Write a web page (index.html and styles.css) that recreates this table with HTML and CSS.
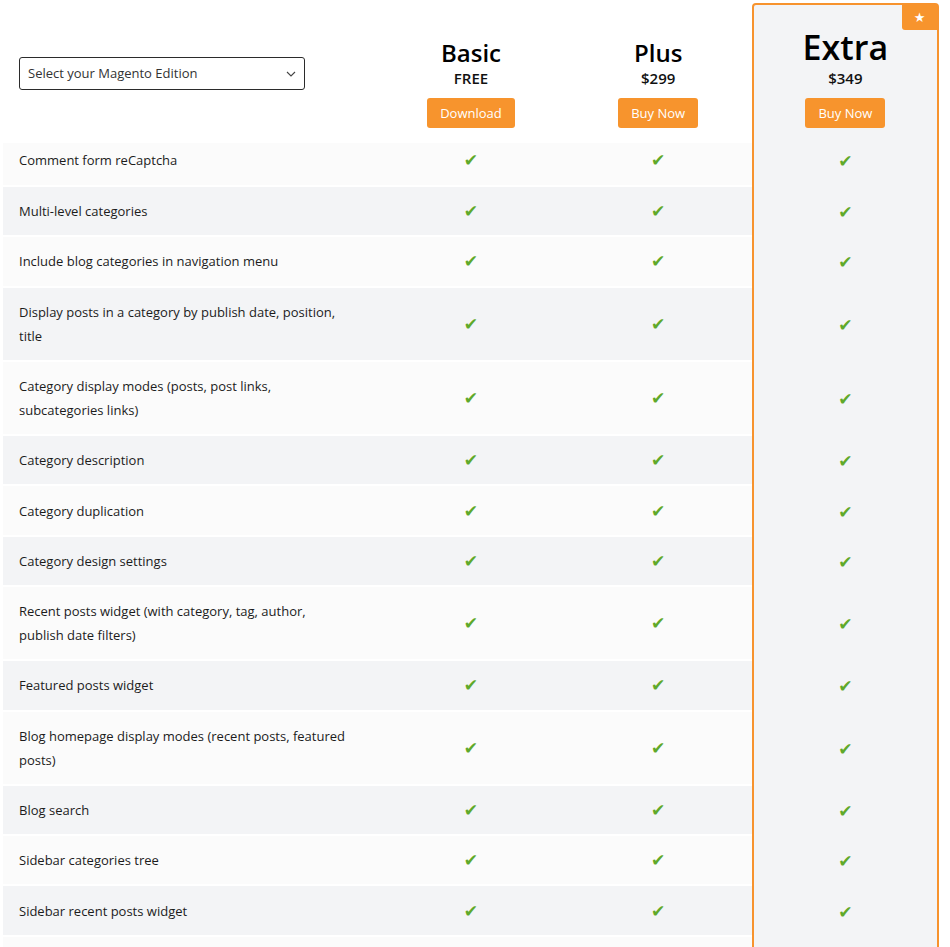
FILE: index.html
```html
<!DOCTYPE html>
<html lang="en">
<head>
<meta charset="utf-8">
<title>Magento Blog Editions</title>
<link rel="stylesheet" href="styles.css">
</head>
<body>
<div class="compare">
  <div class="row head">
    <div class="cell feature select-cell">
      <div class="select">
        <span>Select your Magento Edition</span>
        <svg class="chev" width="10" height="6" viewBox="0 0 10 6"><polyline points="1,1 5,5 9,1" fill="none" stroke="#444" stroke-width="1.1"/></svg>
      </div>
    </div>
    <div class="cell plan">
      <div class="plan-name">Basic</div>
      <div class="price">FREE</div>
      <a class="btn">Download</a>
    </div>
    <div class="cell plan">
      <div class="plan-name">Plus</div>
      <div class="price">$299</div>
      <a class="btn">Buy Now</a>
    </div>
    <div class="cell plan extra extra-top">
      <span class="badge">★</span>
      <div class="plan-name big">Extra</div>
      <div class="price">$349</div>
      <a class="btn">Buy Now</a>
    </div>
  </div>

  <div class="row light first"><div class="cell feature">Comment form reCaptcha</div><div class="cell mark">✔</div><div class="cell mark">✔</div><div class="cell mark extra">✔</div></div>
  <div class="row grey"><div class="cell feature">Multi-level categories</div><div class="cell mark">✔</div><div class="cell mark">✔</div><div class="cell mark extra">✔</div></div>
  <div class="row light"><div class="cell feature">Include blog categories in navigation menu</div><div class="cell mark">✔</div><div class="cell mark">✔</div><div class="cell mark extra">✔</div></div>
  <div class="row grey"><div class="cell feature">Display posts in a category by publish date, position, title</div><div class="cell mark">✔</div><div class="cell mark">✔</div><div class="cell mark extra">✔</div></div>
  <div class="row light"><div class="cell feature">Category display modes (posts, post links, subcategories links)</div><div class="cell mark">✔</div><div class="cell mark">✔</div><div class="cell mark extra">✔</div></div>
  <div class="row grey"><div class="cell feature">Category description</div><div class="cell mark">✔</div><div class="cell mark">✔</div><div class="cell mark extra">✔</div></div>
  <div class="row light"><div class="cell feature">Category duplication</div><div class="cell mark">✔</div><div class="cell mark">✔</div><div class="cell mark extra">✔</div></div>
  <div class="row grey"><div class="cell feature">Category design settings</div><div class="cell mark">✔</div><div class="cell mark">✔</div><div class="cell mark extra">✔</div></div>
  <div class="row light"><div class="cell feature">Recent posts widget (with category, tag, author, publish date filters)</div><div class="cell mark">✔</div><div class="cell mark">✔</div><div class="cell mark extra">✔</div></div>
  <div class="row grey"><div class="cell feature">Featured posts widget</div><div class="cell mark">✔</div><div class="cell mark">✔</div><div class="cell mark extra">✔</div></div>
  <div class="row light"><div class="cell feature">Blog homepage display modes (recent posts, featured posts)</div><div class="cell mark">✔</div><div class="cell mark">✔</div><div class="cell mark extra">✔</div></div>
  <div class="row grey"><div class="cell feature">Blog search</div><div class="cell mark">✔</div><div class="cell mark">✔</div><div class="cell mark extra">✔</div></div>
  <div class="row light"><div class="cell feature">Sidebar categories tree</div><div class="cell mark">✔</div><div class="cell mark">✔</div><div class="cell mark extra">✔</div></div>
  <div class="row grey"><div class="cell feature">Sidebar recent posts widget</div><div class="cell mark">✔</div><div class="cell mark">✔</div><div class="cell mark extra">✔</div></div>
  <div class="row light tail"><div class="cell feature"></div><div class="cell mark"></div><div class="cell mark"></div><div class="cell mark extra"></div></div>
</div>
</body>
</html>
```

FILE: styles.css
```css
html, body {
  margin: 0;
  padding: 0;
  background: #fff;
}
body {
  font-family: "Open Sans", "Liberation Sans", sans-serif;
  color: #1c1c1c;
  font-size: 13px;
  overflow: hidden;
}
.compare {
  width: 936px;
  margin: 3px 0 0 3px;
}
.row {
  display: grid;
  grid-template-columns: 374.4px 187.2px 187.2px 187.2px;
}
.cell {
  box-sizing: border-box;
}
.row.light .cell { background: #fbfbfb; }
.row.grey .cell { background: #f3f4f6; }
.row:not(.head) .cell:not(.extra) {
  border-bottom: 2px solid #fff;
}
.feature {
  padding: 12.15px 28px 12.15px 16px;
  line-height: 24px;
  font-size: 13px;
}
.tail .feature {
  height: 48px;
}
.mark {
  display: flex;
  align-items: center;
  justify-content: center;
  color: #5fa92a;
  font-family: "DejaVu Sans", sans-serif;
  font-size: 17px;
}
.row .cell.extra {
  background: #f3f4f6;
  border-left: 2px solid #f7932e;
  border-right: 2px solid #f7932e;
}
.row.first .feature {
  padding-top: 5px;
  padding-bottom: 13px;
}
.row.first .mark {
  padding-bottom: 8px;
}

/* header */
.head {
  height: 140px;
}
.select-cell {
  display: flex;
  align-items: center;
  padding: 0 0 0 16px;
}
.select {
  width: 286px;
  height: 33px;
  box-sizing: border-box;
  border: 1px solid #2b2b2b;
  border-radius: 3px;
  display: flex;
  align-items: center;
  justify-content: space-between;
  padding: 0 8px 0 8px;
  font-size: 13px;
  color: #333;
}
.chev { margin-top: 1px; }
.plan {
  display: flex;
  flex-direction: column;
  align-items: center;
  justify-content: flex-end;
  padding-bottom: 15px;
  background: #fff;
}
.plan-name {
  font-size: 24px;
  line-height: 30px;
  font-weight: 600;
  color: #000;
}
.plan-name.big {
  font-size: 34px;
  line-height: 42px;
}
.price {
  font-size: 15px;
  line-height: 20px;
  font-weight: 600;
  color: #111;
  margin-bottom: 10px;
}
.btn {
  display: inline-block;
  height: 30px;
  line-height: 30px;
  padding: 0 13px;
  background: #f7942d;
  color: #fff;
  border-radius: 3px;
  font-size: 13px;
  font-weight: 500;
}
.extra-top {
  position: relative;
  border-top: 2px solid #f7932e;
  border-radius: 4px 4px 0 0;
}
.badge {
  position: absolute;
  top: 0;
  right: 0;
  width: 35px;
  height: 25px;
  background: #f7942d;
  color: #fff;
  font-family: "DejaVu Sans", sans-serif;
  font-size: 13px;
  line-height: 25px;
  text-align: center;
  border-radius: 0 0 0 3px;
}
```
